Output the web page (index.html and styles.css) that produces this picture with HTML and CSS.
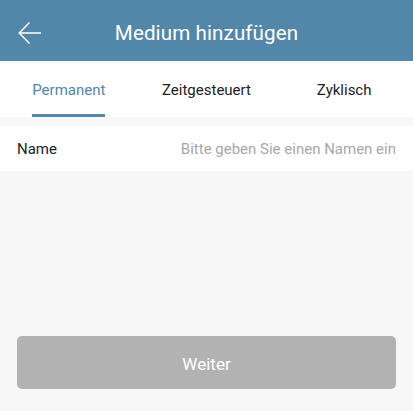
FILE: index.html
```html
<!DOCTYPE html>
<html lang="de">
<head>
<meta charset="utf-8">
<link rel="stylesheet" href="styles.css">
</head>
<body>
<div class="app">
  <header class="topbar">
    <span class="back">
      <svg width="24" height="24" viewBox="0 0 24 24"><path d="M23 12H1.5M11.5 1.5L1.2 12l10.3 10.5" fill="none" stroke="#fff" stroke-width="1.5"/></svg>
    </span>
    <h1 class="title">Medium hinzufügen</h1>
  </header>
  <nav class="tabs">
    <div class="tab active"><span>Permanent</span></div>
    <div class="tab"><span>Zeitgesteuert</span></div>
    <div class="tab"><span>Zyklisch</span></div>
  </nav>
  <div class="row">
    <span class="label">Name</span>
    <span class="placeholder">Bitte geben Sie einen Namen ein</span>
  </div>
  <div class="spacer"></div>
  <div class="footer">
    <button class="btn">Weiter</button>
  </div>
</div>
</body>
</html>
```
FILE: styles.css
```css
html, body { margin: 0; padding: 0; }
body {
  background: #f7f7f7;
  font-family: Roboto, "Noto Sans", sans-serif;
  width: 413px;
  height: 411px;
  overflow: hidden;
}
.app { display: flex; flex-direction: column; height: 411px; }
.topbar {
  height: 61px;
  background: #5287aa;
  display: flex;
  align-items: center;
  justify-content: center;
  position: relative;
}
.back {
  position: absolute;
  left: 18px;
  top: 21px;
  width: 24px;
  height: 24px;
}
.back svg { display: block; }
.title {
  margin: 0;
  padding-top: 4px;
  color: #fff;
  font-weight: 400;
  font-size: 20.6px;
  letter-spacing: 0.1px;
}
.tabs {
  height: 56px;
  background: #fff;
  display: grid;
  grid-template-columns: 1fr 1fr 1fr;
}
.tab {
  display: flex;
  justify-content: center;
  align-items: stretch;
}
.tab span {
  display: flex;
  align-items: center;
  padding-top: 5px;
  font-size: 15px;
  color: #222;
  border-bottom: 3px solid transparent;
  box-sizing: border-box;
}
.tab.active span {
  color: #5287aa;
  border-bottom-color: #5287aa;
}
.row {
  margin-top: 9px;
  height: 44px;
  background: #fff;
  display: flex;
  align-items: center;
  justify-content: space-between;
  padding: 1px 17px 0;
  font-size: 15px;
}
.label { color: #222; }
.placeholder { color: #a8a8a8; }
.spacer { flex: 1; }
.footer { padding: 0 17px 22px; }
.btn {
  width: 100%;
  height: 53px;
  border: none;
  border-radius: 5px;
  background: #b2b2b2;
  color: #fff;
  font-family: Roboto, "Noto Sans", sans-serif;
  font-size: 17px;
  padding: 2px 0 0;
}
```
